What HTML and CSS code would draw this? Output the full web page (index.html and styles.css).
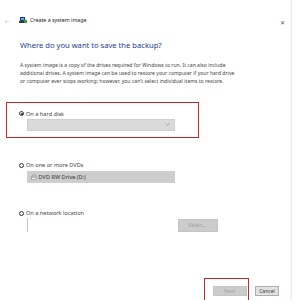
FILE: index.html
```html
<!DOCTYPE html>
<html lang="en">
<head>
    <meta charset="UTF-8">
    <meta name="viewport" content="width=device-width, initial-scale=1.0">
    <title>Create a system image</title>
    <link rel="stylesheet" href="styles.css">
</head>
<body>
    <div class="window">
        <div class="titlebar">
            <span class="back">&#8592;</span>
            <svg class="app-icon" width="8" height="8" viewBox="0 0 8 8">
                <rect x="1" y="1" width="5" height="4" fill="#1b3f7a"/>
                <rect x="2" y="2" width="3" height="2" fill="#6fa8dc"/>
                <rect x="0" y="5" width="7" height="2" fill="#3a3a3a"/>
                <rect x="5" y="4" width="3" height="3" fill="#3c9a3c"/>
            </svg>
            <span class="title">Create a system image</span>
            <span class="close">&#10005;</span>
        </div>

        <div class="content">
            <h1>Where do you want to save the backup?</h1>

            <p class="intro">
                <span>A system image is a copy of the drives required for Windows to run. It can also include</span>
                <span>additional drives. A system image can be used to restore your computer if your hard drive</span>
                <span>or computer ever stops working; however, you can't select individual items to restore.</span>
            </p>

            <div class="choice highlighted">
                <label class="radio-row"><span class="radio checked"></span>On a hard disk</label>
                <div class="dropdown">
                    <span></span>
                    <svg class="chevron" width="5" height="3" viewBox="0 0 5 3"><path d="M0.5 0.5 L2.5 2.5 L4.5 0.5" fill="none" stroke="#888" stroke-width="0.7"/></svg>
                </div>
            </div>

            <div class="choice">
                <label class="radio-row"><span class="radio"></span>On one or more DVDs</label>
                <div class="dropdown dvd">
                    <svg class="drive" width="6" height="6" viewBox="0 0 6 6">
                        <rect x="0.5" y="3" width="5" height="2.5" fill="#f2f2f2" stroke="#777" stroke-width="0.5"/>
                        <circle cx="3" cy="2" r="1.6" fill="#c8c8c8" stroke="#777" stroke-width="0.4"/>
                    </svg>
                    <span>DVD RW Drive (D:)</span>
                </div>
            </div>

            <div class="choice">
                <label class="radio-row"><span class="radio"></span>On a network location</label>
                <div class="network-row">
                    <div class="path-box"></div>
                    <button class="btn disabled">Select...</button>
                </div>
            </div>
        </div>

        <div class="footer">
            <div class="mark">
                <button class="btn disabled next">Next</button>
            </div>
            <button class="btn cancel">Cancel</button>
        </div>
    </div>
</body>
</html>
```

FILE: styles.css
```css
body {
    margin: 0;
    background-color: #fff;
    font-family: 'Noto Sans', 'Liberation Sans', sans-serif;
    color: #444;
    overflow: hidden;
}

.window {
    width: 292px;
    height: 300px;
    display: flex;
    flex-direction: column;
    overflow: hidden;
    border-right: 1px solid #e6e6e6;
    box-sizing: border-box;
}

.titlebar {
    height: 40px;
    flex-shrink: 0;
    display: flex;
    align-items: center;
    padding-left: 4px;
    padding-right: 6px;
    box-sizing: border-box;
}

.back {
    font-size: 7px;
    color: #999;
    width: 15px;
}

.app-icon {
    margin-right: 3px;
}

.title {
    font-size: 5.3px;
    color: #222;
    flex: 1;
}

.close {
    font-size: 6px;
    color: #555;
    margin-top: 6px;
}

.content {
    flex: 1;
}

h1 {
    margin: 0 0 0 20px;
    font-size: 7.6px;
    line-height: 10px;
    font-weight: normal;
    color: #1e3c8c;
}

.intro {
    margin: 11px 0 0 20px;
    font-size: 5.1px;
    line-height: 8px;
    color: #444;
}

.intro span {
    display: block;
    white-space: nowrap;
}

.choice {
    margin-left: 19px;
    margin-top: 23px;
}

.choice.highlighted {
    margin: 17px 0 0 6px;
    width: 193px;
    height: 36px;
    box-sizing: border-box;
    border: 1.5px solid #c1272d;
    padding: 6.5px 0 0 12px;
}

.radio-row {
    display: flex;
    align-items: center;
    height: 8px;
    font-size: 5.6px;
    color: #444;
}

.radio {
    width: 5px;
    height: 5px;
    box-sizing: border-box;
    border: 0.6px solid #333;
    border-radius: 50%;
    margin-right: 2px;
    position: relative;
}

.radio.checked::after {
    content: "";
    position: absolute;
    left: 0.8px;
    top: 0.8px;
    width: 2.2px;
    height: 2.2px;
    border-radius: 50%;
    background-color: #111;
}

.dropdown {
    margin: 1px 0 0 7.5px;
    width: 148px;
    height: 12px;
    box-sizing: border-box;
    background-color: #dadada;
    border: 0.5px solid #cfcfcf;
    display: flex;
    align-items: center;
    justify-content: space-between;
    padding: 0 4px 0 3px;
    font-size: 5.6px;
    color: #333;
}

.dropdown.dvd {
    margin-top: 2px;
    background-color: #cdcdcd;
    justify-content: flex-start;
    gap: 2px;
}

.choice:last-child {
    margin-top: 26px;
}

.network-row {
    margin: 1px 0 0 7.5px;
    height: 14px;
    display: flex;
    align-items: center;
}

.path-box {
    width: 150px;
    height: 14px;
    border-left: 0.6px solid #c8c8c8;
}

.btn {
    font-family: inherit;
    font-size: 5px;
    padding: 0;
    border: 0.5px solid #adadad;
    background-color: #e1e1e1;
    color: #333;
}

.btn.disabled {
    background-color: #cccccc;
    border-color: #c4c4c4;
    color: #a0a0a0;
}

.network-row .btn {
    width: 40px;
    height: 13px;
}

.footer {
    height: 22px;
    flex-shrink: 0;
    display: flex;
    align-items: flex-start;
    padding-left: 204px;
}

.mark {
    display: flex;
    align-items: flex-start;
    border: 1.5px solid #c1272d;
    border-bottom: none;
    padding: 6.5px 1.5px 0 7.5px;
    height: 40px;
}

.next {
    width: 34px;
    height: 10px;
}

.cancel {
    margin-top: 8px;
    margin-left: 6px;
    width: 24px;
    height: 10px;
}
```
